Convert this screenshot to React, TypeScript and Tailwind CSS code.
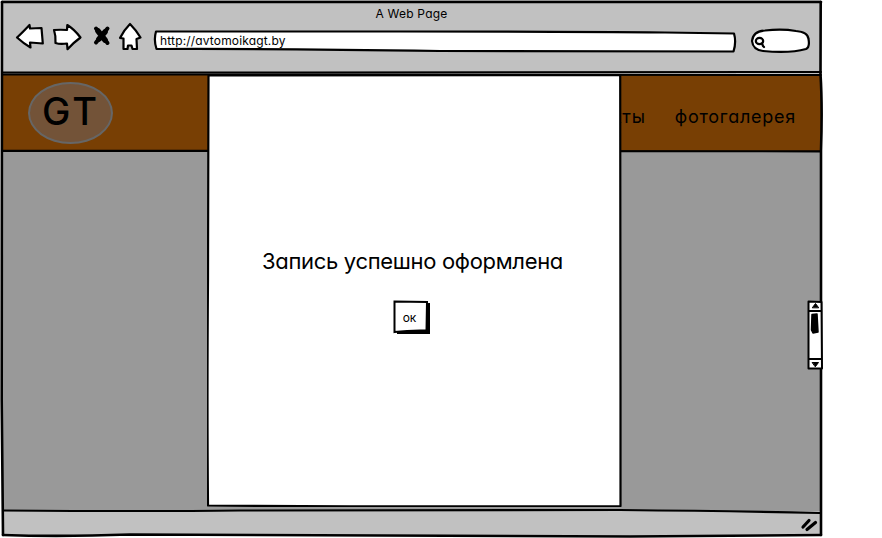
import React from "react";

const ink = { stroke: "#000", strokeLinecap: "round" as const, strokeLinejoin: "round" as const };

function NavIcons() {
  return (
    <svg className="block h-8 w-[132px]" viewBox="12 21 132 32" fill="#fff" strokeWidth="2.2" {...ink}>
      <path d="M17 37.500 Q22 33 29.500 25 L30 28.500 L41.500 28 Q42 34 42.800 43.500 L30 42.500 L30.500 47.500 Q23 43 17 37.500Z" />
      <path d="M54 30 Q61 29.500 67 30 L67.300 25 Q74 29 80.500 37.500 Q73 43 67.500 49.200 L67 43.500 Q60 44.500 55.500 43 Q56 36 54 30Z" />
      <path d="M96 28.500 L107.500 43 M107.500 28.500 L96 42.500" strokeWidth="4" />
      <path d="M98 31 L105 40 M105 32 L99 39" strokeWidth="5.600" />
      <path d="M130 24 Q136 30 140.500 37.500 L136.500 39 L137 49 L132.500 49 L131.500 45.500 L128 45.500 L127.500 49 L123.500 49 L123.500 38.500 L120 38 Q124 30 130 24Z" />
    </svg>
  );
}

function AddressBar() {
  return (
    <div className="relative h-6 w-[586px]">
      <svg className="absolute inset-0" width="586" height="24" viewBox="152 29 586 24" fill="#fff" strokeWidth="2.200" {...ink}>
        <path d="M156 31.500 L400 31.500 Q570 31.500 665 32.500 L734 33.500 Q736.500 42 733.500 51.500 L440 51 Q270 48.500 156.500 49 Q153.500 40 156 31.500Z" />
      </svg>
      <div className="relative pt-[5px] pl-2 text-[12px] leading-[14px] tracking-[0.16px]">http://avtomoikagt.by</div>
    </div>
  );
}

function SearchBox() {
  return (
    <svg className="block" width="62" height="27" viewBox="749 28 62 27" fill="#fff" strokeWidth="2.200" {...ink}>
      <path d="M752 41 Q753 31 765 30.500 Q782 28.500 796 31 Q808 32 808.500 39 Q810 47 806 49 Q790 53.500 763 51 Q753 50 752 41Z" />
      <ellipse cx="759.500" cy="41" rx="3.700" ry="3.200" />
      <path d="M762 43.500 L763 46 L764 47" />
    </svg>
  );
}

function Toolbar() {
  return (
    <header className="h-[74px] bg-[#c1c1c1]">
      <div className="flex h-[29px] justify-center pt-[6px] text-[12px] leading-[15px] tracking-[0.2px]">
        <span>A Web Page</span>
      </div>
      <div className="flex items-start">
        <div className="-mt-2 ml-2.5"><NavIcons /></div>
        <div className="ml-2"><AddressBar /></div>
        <div className="-mt-px ml-[11px]"><SearchBox /></div>
      </div>
    </header>
  );
}

function SiteHeader() {
  return (
    <div className="flex h-[78px] items-start justify-between bg-[#783f04] pr-[25px] pl-[26px]">
      <div className="mt-2 flex h-[62px] w-[85px] justify-center rounded-[50%] border-2 border-[#666] bg-[#735338]">
        <span className="pt-[8px] pl-px text-[38px] leading-[39px] font-medium tracking-[3px]">GT</span>
      </div>
      <nav className="flex gap-[29px] pt-[31px] text-[18px] leading-6 tracking-[0.75px]">
        <span>контакты</span>
        <span>фотогалерея</span>
      </nav>
    </div>
  );
}

function Dialog() {
  return (
    <section className="absolute top-[74px] left-[207px] flex h-[433px] w-[415px] flex-col items-center">
      <svg className="absolute inset-0" width="415" height="433" viewBox="207 74 415 433" fill="#fff" strokeWidth="2.200" {...ink}>
        <path d="M208.500 75.500 L620.200 75 Q619.800 250 620.500 390 L620.500 506 Q400 507 208 505.500 Q207 400 208 280Z" />
      </svg>
      <p className="relative mt-[171px] pr-[4px] text-[22px] leading-8 tracking-[-0.32px] whitespace-nowrap">Запись успешно оформлена</p>
      <button className="relative mt-[23px] mr-[6px] h-[35px] w-[38px]">
        <svg className="absolute inset-0" width="38" height="35" viewBox="393 300 38 35">
          <path d="M397 304 L430 303 L430 334 L397 334Z" />
          <path d="M394.500 301.500 L427 302 L426.500 330.500 Q410 330 394.500 332Z" fill="#fff" strokeWidth="2" stroke="#000" />
        </svg>
        <span className="relative block pr-1 text-[12px] leading-[30px]">ок</span>
      </button>
    </section>
  );
}

function Scrollbar() {
  return (
    <svg className="absolute top-[300px] left-[806px]" width="18" height="71" viewBox="806 300 18 71" {...ink}>
      <path d="M808.500 301.500 L821.500 302 L822 368.500 L808.500 368.500Z" fill="#fff" strokeWidth="2" />
      <path d="M809 311 L821 311 M809 359 L821 359" strokeWidth="2" />
      <path d="M812.500 307.500 L815.500 303.500 L818.500 307.500Z M812.500 362.500 L818.500 362.500 L815.500 366.500Z" />
      <path d="M812 314.500 L817 314 L818 332 L813 333 L811.500 330Z" strokeWidth="1.500" />
    </svg>
  );
}

function FrameLines() {
  return (
    <svg className="pointer-events-none absolute inset-0" width="826" height="538" viewBox="0 0 826 538" fill="none" {...ink}>
      <path d="M2 2 L821 2" strokeWidth="2.600" />
      <path d="M2 2 L1.700 400 L3 535" strokeWidth="2.600" />
      <path d="M820.700 2 L820.500 74 Q822.500 105 821 151 L821 535" strokeWidth="2.600" />
      <path d="M3 72.500 L300 72.500 L821 72" strokeWidth="2" />
      <path d="M3 74.500 L300 74.500 L821 75" strokeWidth="2" />
      <path d="M2 150.800 L821 151.300" strokeWidth="2.200" />
      <path d="M3 510.500 Q150 511.500 240 510.500 L620 510 Q730 511 820 513" strokeWidth="2.200" />
      <path d="M3 535 Q60 537 130 534.500 Q400 535 630 536.500 Q740 535.500 821 535" strokeWidth="2.600" />
      <path d="M803 527 L809 520.500 M807 529.500 L815.500 522.500" strokeWidth="3.200" />
    </svg>
  );
}

export default function App() {
  return (
    <div className="h-[538px] w-[882px] overflow-hidden bg-white font-['Inter','Noto_Sans',sans-serif] text-black [font-feature-settings:'cv11']">
      <main className="relative ml-0.5 h-[536px] w-[819px] bg-[#999]">
        <Toolbar />
        <SiteHeader />
        <div className="h-[359px] bg-[#999]" />
        <footer className="h-[25px] bg-[#c1c1c1]" />
        <div className="absolute top-0 -left-0.5 h-[538px] w-[826px]">
          <FrameLines />
          <Dialog />
          <Scrollbar />
        </div>
      </main>
    </div>
  );
}
